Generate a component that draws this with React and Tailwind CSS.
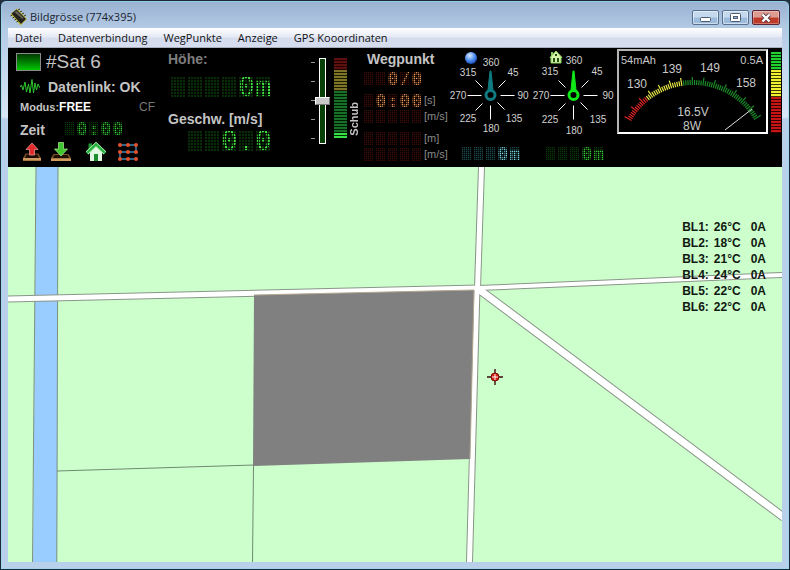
import React from "react";

const menuItems = ["Datei", "Datenverbindung", "WegPunkte", "Anzeige", "GPS Kooordinaten"];

const controllers = [
  { name: "BL1:", temp: "26°C", current: "0A" },
  { name: "BL2:", temp: "18°C", current: "0A" },
  { name: "BL3:", temp: "21°C", current: "0A" },
  { name: "BL4:", temp: "24°C", current: "0A" },
  { name: "BL5:", temp: "22°C", current: "0A" },
  { name: "BL6:", temp: "22°C", current: "0A" },
];

const largeLed = {
  green:
    "text-[#3fe03f] bg-[linear-gradient(90deg,transparent_1px,#082c08_1px,#082c08_15px,transparent_15px)]",
};

const smallLed = {
  lime: "text-[#34cc34] bg-[linear-gradient(90deg,transparent_1px,#093409_1px,#093409_10px,transparent_10px)]",
  orange:
    "text-[#eb9650] bg-[linear-gradient(90deg,transparent_1px,#380d08_1px,#380d08_10px,transparent_10px)]",
  teal: "text-[#74d6e0] bg-[linear-gradient(90deg,transparent_1px,#1c4348_1px,#1c4348_10px,transparent_10px)]",
};

// Dot matrix readout, one cell for each character
const LedDisplay = ({ value, color, large }) => {
  const size = large
    ? "w-[17px] h-5 text-[27px] leading-5 [mask-image:linear-gradient(#000_2px,#0003_2px),linear-gradient(90deg,#000_2px,#0003_2px)] [mask-size:3px_3px] [mask-position:1px_0]"
    : "w-3 h-[13px] text-[18px] font-bold leading-[13px] [mask-image:linear-gradient(#000_1px,#0005_1px),linear-gradient(90deg,#000_1px,#0005_1px)] [mask-size:2px_2px] [mask-position:1px_0]";
  const tone = large ? largeLed[color] : smallLed[color];
  return (
    <div className={large ? "h-5 whitespace-nowrap leading-5" : "h-[13px] whitespace-nowrap leading-[13px]"}>
      {value.split("").map((char, i) => (
        <span
          key={i}
          className={`inline-block whitespace-pre text-center align-top font-['DejaVu_Sans_Mono',monospace] [mask-composite:intersect] ${size} ${tone}`}
        >
          {char}
        </span>
      ))}
    </div>
  );
};

const ChipIcon = () => (
  <svg viewBox="0 0 18 18" className="h-[18px] w-[18px]">
    <path d="M0.5 6 L7 0.5 L17 11 L10.5 17.5 Z" fill="#c2be3c" />
    <path d="M1.5 5.5 L6.5 1.5 L16 11 L11 16 Z" fill="#23231c" />
    <path d="M4.5 4 L6.5 3 L13.5 10 L12.5 11 Z" fill="#6c6c60" />
    <path
      d="M0.5 8l2-1M2.5 10l2-1M4.5 12l2-1M6.5 14l2-1M8 2l2-1M10 4l2-1M12 6l2-1M14 8l2-1"
      stroke="#3c3a10"
      strokeWidth="1"
    />
  </svg>
);

const TitleBar = () => (
  <header className="flex h-[27px] items-start justify-between px-[2px]">
    <div className="flex items-center gap-[2px] pt-[7px]">
      <ChipIcon />
      <h1 className="text-[11px] leading-4 text-[#1b2430]">Bildgrösse (774x395)</h1>
    </div>
    <div className="flex gap-[3px] pt-[9px]">
      <button
        aria-label="Minimieren"
        className="flex h-[15px] w-[27px] items-center justify-center rounded-[2px] border border-[#55718f] bg-linear-to-b from-[#c5d9ee] from-45% to-[#9dbcdc] to-55% inset-ring inset-ring-white/50"
      >
        <svg viewBox="0 0 12 5" className="mt-1 h-[5px] w-3">
          <rect x="0.5" y="0.5" width="10" height="4" rx="1" fill="#fff" stroke="#4b5a6e" />
        </svg>
      </button>
      <button
        aria-label="Maximieren"
        className="flex h-[15px] w-[27px] items-center justify-center rounded-[2px] border border-[#55718f] bg-linear-to-b from-[#c5d9ee] from-45% to-[#9dbcdc] to-55% inset-ring inset-ring-white/50"
      >
        <svg viewBox="0 0 11 9" className="h-[9px] w-[11px]">
          <rect x="0.5" y="0.5" width="10" height="8" rx="1" fill="#fff" stroke="#4b5a6e" />
          <rect x="3.5" y="3.5" width="4" height="2" fill="#9dbcdc" stroke="#4b5a6e" />
        </svg>
      </button>
      <button
        aria-label="Schließen"
        className="flex h-[15px] w-7 items-center justify-center rounded-[2px] border border-[#5a2430] bg-linear-to-b from-[#dc9c92] from-45% to-[#bd3b28] to-55% inset-ring inset-ring-white/30"
      >
        <svg viewBox="0 0 12 10" className="h-[10px] w-3">
          <path d="M2.5 1.5 L9.5 8.5 M9.5 1.5 L2.5 8.5" stroke="#5b3540" strokeWidth="4" />
          <path d="M2.5 1.5 L9.5 8.5 M9.5 1.5 L2.5 8.5" stroke="#fff" strokeWidth="2.4" />
        </svg>
      </button>
    </div>
  </header>
);

const MenuBar = () => (
  <nav className="flex h-5 items-center gap-4 border-b border-[#a9afbd] bg-linear-to-b from-white from-0% via-[#e6eaf5] via-45% to-[#d5dcee] to-55% pl-[7px]">
    {menuItems.map((item) => (
      <button key={item} className="text-[11px] leading-4 text-[#111]">
        {item}
      </button>
    ))}
  </nav>
);

const UploadIcon = () => (
  <svg viewBox="0 0 20 20" className="h-5 w-5">
    <path d="M3.5 11.5 L16.5 11.5 L19 16 L19 19 L1 19 L1 16 Z" fill="#7a4e26" />
    <path d="M4.5 12.5 L15.5 12.5 L17 16 L3 16 Z" fill="#1d0f06" />
    <path d="M1 16 L19 16 L19 18.5 L1 18.5 Z" fill="#cf9a5e" />
    <path d="M10 1 L16 7.5 L12.5 7.5 L12.5 13 L7.5 13 L7.5 7.5 L4 7.5 Z" fill="#e22b2b" stroke="#f4a09a" strokeWidth="0.7" />
  </svg>
);

const DownloadIcon = () => (
  <svg viewBox="0 0 20 20" className="h-5 w-5">
    <path d="M2.5 12 L17.5 12 L20 16 L20 19 L0 19 L0 16 Z" fill="#7a4e26" />
    <path d="M3.5 13 L16.5 13 L18 16 L2 16 Z" fill="#1d0f06" />
    <path d="M0 16.5 L20 16.5 L20 19 L0 19 Z" fill="#cf9a5e" />
    <path d="M10 14 L16.5 7 L12.5 7 L12.5 0.5 L7.5 0.5 L7.5 7 L3.5 7 Z" fill="#3fc62f" stroke="#b4ee9c" strokeWidth="0.7" />
  </svg>
);

const HomeIcon = () => (
  <svg viewBox="0 0 20 20" className="h-5 w-5">
    <path d="M2.5 1.5 H6 V7 H2.5 Z" fill="#1c9a30" />
    <path d="M4 10 L10 4 L16 10 V19 H4 Z" fill="#e4f9e4" />
    <path d="M8 12 H12 V19 H8 Z" fill="#1d8f2f" />
    <path d="M1 11 L10 2.5 L19 11" fill="none" stroke="#b9efb9" strokeWidth="4" />
    <path d="M1 11 L10 2.5 L19 11" fill="none" stroke="#22b13c" strokeWidth="2.4" />
  </svg>
);

const GridIcon = () => (
  <svg viewBox="0 0 20 20" className="h-5 w-5">
    <path d="M2 3 H18 V10 H2 V17 H18" fill="none" stroke="#3b87b5" strokeWidth="1.4" />
    {[3, 10, 17].map((y) =>
      [2, 10, 18].map((x) => <circle key={`${x}-${y}`} cx={x} cy={y} r="2" fill="#e4502a" />)
    )}
  </svg>
);

const StatusPanel = () => (
  <section className="w-[158px] shrink-0 pl-2 text-[#c4c4c4]">
    <div className="flex h-7 items-center gap-[5px]">
      <div className="h-[18px] w-[25px] border border-[#8a8a8a] bg-linear-to-b from-[#003c00] to-[#00c800]" />
      <span className="text-[19px] leading-6">#Sat 6</span>
    </div>
    <div className="flex h-[22px] items-center gap-2 pl-1">
      <svg viewBox="0 0 20 16" className="h-4 w-5">
        <path
          d="M0 8 L1.5 6 L3 11 L5 3 L6.5 13 L8.5 5 L10 14 L12 0.5 L13.5 14 L15 4 L16.5 11 L18 5 L20 9"
          fill="none"
          stroke="#2fc82f"
          strokeWidth="1"
        />
      </svg>
      <span className="whitespace-nowrap text-[14px] font-bold leading-4">Datenlink: OK</span>
    </div>
    <div className="flex h-[18px] items-center justify-between pl-1 pr-[11px] text-[12px] leading-4">
      <span className="text-[11px] font-bold">
        Modus:<span className="text-[12px] text-white">FREE</span>
      </span>
      <span className="text-[#777]">CF</span>
    </div>
    <div className="flex h-[26px] items-start gap-[19px] pl-1 pt-[6px]">
      <span className="text-[14px] font-bold leading-4">Zeit</span>
      <LedDisplay value=" 0:00" color="lime" />
    </div>
    <div className="flex h-5 items-center pl-[6px]">
      <button aria-label="Upload" className="mr-[9px]">
        <UploadIcon />
      </button>
      <button aria-label="Download" className="mr-[15px]">
        <DownloadIcon />
      </button>
      <button aria-label="Home" className="mr-3">
        <HomeIcon />
      </button>
      <button aria-label="Wegpunkte">
        <GridIcon />
      </button>
    </div>
  </section>
);

const FlightPanel = () => (
  <section className="w-[145px] shrink-0 pl-[2px] pt-[3px]">
    <h2 className="text-[14px] font-bold leading-4 text-[#7d7d7d]">Höhe:</h2>
    <div className="pl-[2px] pt-[10px]">
      <LedDisplay value="    0m" color="green" large />
    </div>
    <h2 className="pt-[14px] text-[14px] font-bold leading-4 text-[#c4c4c4]">Geschw. [m/s]</h2>
    <div className="pl-[19px] pt-1">
      <LedDisplay value="  0.0" color="green" large />
    </div>
  </section>
);

const ThrottlePanel = () => (
  <section className="flex w-[52px] shrink-0 items-start pt-[10px]">
    <div className="flex h-[85px] w-1 flex-col justify-between py-1">
      <i className="h-px bg-[#9a9a9a]" />
      <i className="h-px bg-[#9a9a9a]" />
      <i className="h-px bg-[#9a9a9a]" />
      <i className="h-px bg-[#9a9a9a]" />
      <i className="h-px bg-[#9a9a9a]" />
    </div>
    <input
      type="range"
      aria-label="Schub"
      min="0"
      max="100"
      defaultValue="50"
      className="h-[86px] w-[15px] shrink-0 appearance-none bg-transparent [direction:rtl] [writing-mode:vertical-lr] [&::-webkit-slider-runnable-track]:w-[7px] [&::-webkit-slider-runnable-track]:border [&::-webkit-slider-runnable-track]:border-white [&::-webkit-slider-runnable-track]:bg-[#064006] [&::-webkit-slider-thumb]:-ml-[5px] [&::-webkit-slider-thumb]:h-2 [&::-webkit-slider-thumb]:w-[15px] [&::-webkit-slider-thumb]:appearance-none [&::-webkit-slider-thumb]:border [&::-webkit-slider-thumb]:border-t-white [&::-webkit-slider-thumb]:border-l-white [&::-webkit-slider-thumb]:border-r-[#777] [&::-webkit-slider-thumb]:border-b-[#777] [&::-webkit-slider-thumb]:bg-[#c8c8c8]"
    />
    <div className="ml-[4px] flex h-20 w-[13px] shrink-0 flex-col">
      <div className="h-3 bg-[repeating-linear-gradient(#5e1010_0_2px,#200_2px_3px)]" />
      <div className="h-[21px] bg-[repeating-linear-gradient(#7d7428_0_2px,#1c1a00_2px_3px)]" />
      <div className="h-[42px] bg-[repeating-linear-gradient(#187028_0_2px,#001c00_2px_3px)]" />
      <div className="h-[5px] bg-[repeating-linear-gradient(#38e048_0_2px,#003000_2px_3px)]" />
    </div>
    <span className="mt-9 rotate-180 pb-2 text-[11px] font-bold leading-[14px] text-[#c4c4c4] [writing-mode:vertical-rl]">
      Schub
    </span>
  </section>
);

const WaypointPanel = () => (
  <section className="w-[86px] shrink-0 pt-[3px] text-[11px] leading-[13px] text-[#8a8a8a]">
    <h2 className="pl-1 text-[14px] font-bold leading-4 text-[#c4c4c4]">Wegpunkt</h2>
    <div className="pt-[5px]">
      <LedDisplay value="  0/0" color="orange" />
    </div>
    <div className="flex gap-px pt-[9px]">
      <LedDisplay value=" 0:00" color="orange" />
      <span>[s]</span>
    </div>
    <div className="flex gap-px pt-[3px]">
      <LedDisplay value="     " color="orange" />
      <span>[m/s]</span>
    </div>
    <div className="flex gap-px pt-[9px]">
      <LedDisplay value="     " color="orange" />
      <span>[m]</span>
    </div>
    <div className="flex gap-px pt-[3px]">
      <LedDisplay value="     " color="orange" />
      <span>[m/s]</span>
    </div>
  </section>
);

const Compass = ({ color, labels, children }) => (
  <svg viewBox="0 0 83 98" className="h-[98px] w-[83px]">
    <path
      d="M65 47H51M55 61L48 54M41 71V57M26 62L33 55M18 47H32M26 32L33 39M56 32L49 39"
      stroke="#fff"
      strokeWidth="1"
      transform="translate(0.5 0.5)"
    />
    <path d="M41 23 H42 L44 42 H39 Z" fill={color} stroke={color} />
    <circle cx="41.5" cy="47" r="4.5" fill="#000" stroke={color} strokeWidth="3" />
    <g fill="#d0d0d0" fontSize="10" textAnchor="middle">
      {labels.map(([text, x, y]) => (
        <text key={text} x={x} y={y + 4}>
          {text}
        </text>
      ))}
    </g>
    {children}
  </svg>
);

const positionLabels = [
  ["360", 42, 14],
  ["45", 64, 24],
  ["90", 74, 47],
  ["135", 65, 70],
  ["180", 42, 80],
  ["225", 19, 70],
  ["270", 9, 47],
  ["315", 19, 24],
];

const homeLabels = [
  ["360", 42, 12],
  ["45", 65, 23],
  ["90", 76, 47],
  ["135", 66, 71],
  ["180", 42, 82],
  ["225", 18, 71],
  ["270", 9, 47],
  ["315", 18, 23],
];

const CompassPanel = () => (
  <section className="flex shrink-0">
    <div>
      <Compass color="#0f7a80" labels={positionLabels}>
        <defs>
          <radialGradient id="ball" cx="0.4" cy="0.3" r="0.7">
            <stop offset="0" stopColor="#d8eaff" />
            <stop offset="0.6" stopColor="#4d8df0" />
            <stop offset="1" stopColor="#1c4fb8" />
          </radialGradient>
        </defs>
        <circle cx="22" cy="10" r="6" fill="url(#ball)" />
      </Compass>
      <div className="pl-3 pt-px">
        <LedDisplay value="   0m" color="teal" />
      </div>
    </div>
    <div>
      <Compass color="#10e818" labels={homeLabels}>
        <path d="M19 4 H21 V8 H19 Z" fill="#7fc85a" />
        <path d="M24 3 L30 9.5 H29 V15 H19 V9.5 H18 Z" fill="#d4f2a8" stroke="#8fd060" />
        <path d="M21 10H23V14H21ZM25 10H27V14H25ZM23 6H25V8H23Z" fill="#234d12" />
      </Compass>
      <div className="pl-[13px] pt-px">
        <LedDisplay value="   0m" color="lime" />
      </div>
    </div>
  </section>
);

const ticks = Array.from({ length: 71 }, (_, i) => {
  const deg = -60 + i * 1.7;
  const rad = (deg * Math.PI) / 180;
  const outer = i % 5 === 0 ? 79 : 76;
  return {
    x1: 75 + 71 * Math.sin(rad),
    y1: 106 - 71 * Math.cos(rad),
    x2: 75 + outer * Math.sin(rad),
    y2: 106 - outer * Math.cos(rad),
    color: deg < -38 ? "#e02424" : deg < -8.5 ? "#e8e848" : "#1c8a28",
  };
});

const VoltagePanel = () => (
  <section className="flex shrink-0 items-start gap-[3px] pr-px pt-px">
    <div className="border-2 border-t-[#b4b4b4] border-l-[#b4b4b4] border-r-white border-b-white">
      <svg viewBox="1 1 147 81" className="h-[81px] w-[147px]">
        {ticks.map((t, i) => (
          <line key={i} x1={t.x1} y1={t.y1} x2={t.x2} y2={t.y2} stroke={t.color} strokeWidth="1.2" />
        ))}
        <path d="M107 80 L134 59" stroke="#e0e0e0" strokeWidth="1" />
        <g fill="#c8c8c8" fontSize="12" textAnchor="middle">
          <text x="19" y="38">130</text>
          <text x="54" y="23">139</text>
          <text x="92" y="22">149</text>
          <text x="128" y="37">158</text>
          <text x="75" y="66">16.5V</text>
          <text x="74" y="80">8W</text>
        </g>
        <g fill="#c8c8c8" fontSize="11">
          <text x="3" y="14">54mAh</text>
          <text x="145" y="14" textAnchor="end">0.5A</text>
        </g>
      </svg>
    </div>
    <div className="mt-[3px] w-[10px]">
      <div className="h-[18px] bg-[repeating-linear-gradient(#20d030_0_2px,#042a04_2px_3px)]" />
      <div className="h-[27px] bg-[repeating-linear-gradient(#f0f030_0_2px,#3a3a00_2px_3px)]" />
      <div className="h-9 bg-[repeating-linear-gradient(#c81414_0_2px,#300_2px_3px)]" />
    </div>
  </section>
);

const Dashboard = () => (
  <div className="flex h-[119px] overflow-hidden bg-black font-['Liberation_Sans',Arial,sans-serif]">
    <StatusPanel />
    <FlightPanel />
    <ThrottlePanel />
    <WaypointPanel />
    <CompassPanel />
    <div className="grow" />
    <VoltagePanel />
  </div>
);

const MapView = () => (
  <main className="relative min-h-[200px] flex-1 overflow-hidden bg-[#ccffcc]">
    <svg viewBox="0 0 774 395" preserveAspectRatio="xMinYMin slice" className="absolute inset-0 h-full w-full">
      <path d="M28 0 H50 L49 395 H25 Z" fill="#99ccff" />
      <path d="M28 0 L24.5 395 M50 0 L48.8 395" stroke="#7d917d" strokeWidth="1" />
      <path d="M49 304 L246 298 M245.5 298 L244.5 395" stroke="#6f8a6f" strokeWidth="1" />
      <g stroke="#8a958a" fill="none">
        <path d="M0 132 L470 121" strokeWidth="7" />
        <path d="M470 121 L774 108" strokeWidth="6" />
        <path d="M473.5 0 L469.5 121" strokeWidth="7" />
        <path d="M469 121 L461.5 395" strokeWidth="7" />
        <path d="M471 122.5 L776 350.5" strokeWidth="9" />
      </g>
      <g stroke="#fff" fill="none">
        <path d="M0 132 L470 121" strokeWidth="5" />
        <path d="M470 121 L774 108" strokeWidth="4" />
        <path d="M473.5 0 L469.5 122" strokeWidth="5" />
        <path d="M469 119 L461.5 395" strokeWidth="5" />
        <path d="M470 121.7 L776 350.5" strokeWidth="7" />
      </g>
      <path d="M246 128 L466 123 L462 292 L245 299 Z" fill="#808080" />
      <path d="M246 128 L466 123 L462 292" fill="none" stroke="#b5a890" strokeWidth="1" />
      <g transform="translate(487 210)">
        <path d="M0 -8 V8 M-8 0 H8" stroke="#3a0a0a" strokeWidth="1.4" />
        <circle r="4" fill="#d81e10" stroke="#7a0c08" strokeWidth="1" />
        <path d="M0 -3 V3 M-3 0 H3" stroke="#fff" strokeWidth="1" />
      </g>
    </svg>
    <table className="absolute right-4 top-[52px] font-['Liberation_Sans',Arial,sans-serif] text-[12px] font-bold leading-4 text-[#101810]">
      <tbody>
        {controllers.map((c) => (
          <tr key={c.name}>
            <td className="p-0 pr-[5px]">{c.name}</td>
            <td className="p-0 pr-[10px]">{c.temp}</td>
            <td className="p-0">{c.current}</td>
          </tr>
        ))}
      </tbody>
    </table>
  </main>
);

const App = () => {
  return (
    <div className="min-h-screen bg-[#20303c] font-['Open_Sans','Noto_Sans',sans-serif]">
      <div className="flex min-h-screen flex-col rounded-t-[6px] border border-[#1a2a36] bg-[linear-gradient(#98b1d0_0,#b4cbe5_28px,#d8e7f6_116px,#b9d0ea_118px)] px-[7px] pb-[7px] inset-ring inset-ring-[#8fdcf0]/60">
        <TitleBar />
        <MenuBar />
        <Dashboard />
        <MapView />
      </div>
    </div>
  );
};

export default App;
